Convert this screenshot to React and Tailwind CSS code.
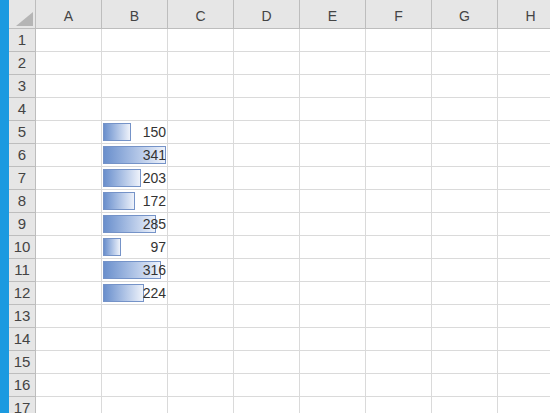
import React from 'react'

const cols = ['A', 'B', 'C', 'D', 'E', 'F', 'G', 'H']
const values = { 5: 150, 6: 341, 7: 203, 8: 172, 9: 285, 10: 97, 11: 316, 12: 224 }
const rows = Array.from({ length: 17 }, (_, i) => i + 1)

// データバー: 最小 97 -> 18px, 最大 341 -> 63px
function barWidth(v) {
  return Math.round(18 + ((v - 97) / (341 - 97)) * 45)
}

function Corner() {
  return (
    <div className="w-[27px] h-[29px] shrink-0 bg-[#e6e6e6] border-r border-b border-[#bdbdbd] flex items-end justify-end pr-[2px] pb-[2px]">
      <svg width="17" height="14" viewBox="0 0 17 14">
        <polygon points="17,0 17,14 0,14" fill="#b5b5b5" />
      </svg>
    </div>
  )
}

export default function App() {
  return (
    <div
      className="w-[550px] h-[413px] overflow-hidden flex bg-white"
      style={{ fontFamily: '"Liberation Sans", "Noto Sans CJK JP", sans-serif' }}
    >
      <div className="w-[9px] shrink-0 bg-[#1b9ae0]" />
      <div className="flex flex-col">
        {/* 列見出し */}
        <div className="flex">
          <Corner />
          {cols.map((c) => (
            <div
              key={c}
              className="w-[66px] h-[29px] shrink-0 bg-[#e6e6e6] border-r border-b border-[#bdbdbd] flex items-center justify-center pt-[5px] text-[14px] text-[#444]"
            >
              {c}
            </div>
          ))}
        </div>

        {rows.map((r) => (
          <div key={r} className="flex">
            <div className="w-[27px] h-[23px] shrink-0 bg-[#e6e6e6] border-r border-b border-[#bdbdbd] flex items-center justify-center text-[15px] text-[#444]">
              {r}
            </div>
            {cols.map((c) => (
              <div
                key={c}
                className="w-[66px] h-[23px] shrink-0 border-r border-b border-[#dadada] relative flex items-center justify-end pr-[1px]"
              >
                {c === 'B' && values[r] != null && (
                  <>
                    <div
                      className="absolute left-[1px] top-[2px] h-[18px] border border-[#7593c8] bg-gradient-to-r from-[#6a8fcc] to-[#eef2fa]"
                      style={{ width: barWidth(values[r]) }}
                    />
                    <span className="relative text-[14px] text-[#333]">{values[r]}</span>
                  </>
                )}
              </div>
            ))}
          </div>
        ))}
      </div>
    </div>
  )
}
